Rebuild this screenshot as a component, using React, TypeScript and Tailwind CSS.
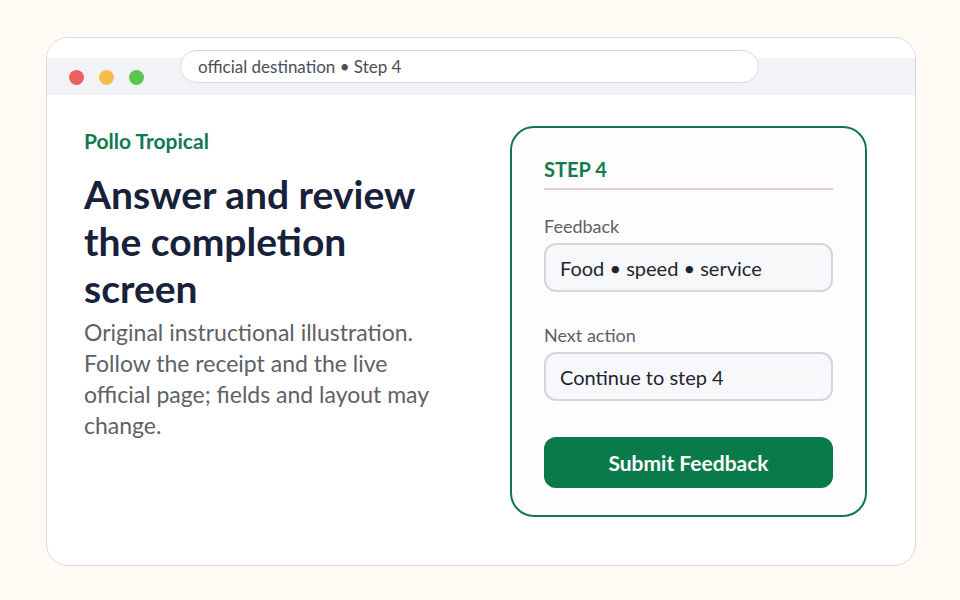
import React from 'react';

const fields = [
  { label: 'Feedback', value: 'Food • speed • service' },
  { label: 'Next action', value: 'Continue to step 4' },
];

export default function App() {
  return (
    <div
      className="min-h-[600px] w-[960px] bg-[#fffaf4] pt-[37px] pl-[46px]"
      style={{ fontFamily: 'Lato, "Noto Sans", sans-serif' }}
    >
      <div className="h-[529px] w-[870px] overflow-hidden rounded-[22px] border border-[#d8dae2] bg-white">
        {/* browser chrome */}
        <div className="flex h-[57px] items-start bg-[linear-gradient(to_bottom,#ffffff_20px,#f1f3f6_20px)] pl-[22px]">
          <div className="mt-[32px] flex gap-[15px]">
            <span className="h-[15px] w-[15px] rounded-full bg-[#ec5f5f]" />
            <span className="h-[15px] w-[15px] rounded-full bg-[#f6bb4a]" />
            <span className="h-[15px] w-[15px] rounded-full bg-[#5ac54f]" />
          </div>
          <div className="ml-[36px] mt-[12px] flex h-[33px] w-[579px] items-center rounded-full border border-[#d8dae2] bg-white pl-[17px] text-[17px] text-[#4a4f59]">
            official destination • Step 4
          </div>
        </div>

        <div className="flex pt-[31px] pl-[37px]">
          <div className="w-[360px]">
            <div className="pt-[2px] text-[21px] font-bold leading-[26px] text-[#0f7a4f]">
              Pollo Tropical
            </div>
            <h1 className="mt-[17px] text-[39px] font-bold leading-[47px] text-[#18213a]">
              Answer and review the completion screen
            </h1>
            <p className="mt-[5px] text-[23px] leading-[31px] text-[#5d6169]">
              Original instructional illustration. Follow the receipt and the live official page; fields and layout may change.
            </p>
          </div>

          <div className="ml-[66px] h-[391px] w-[357px] rounded-[24px] border-2 border-[#127652] bg-[#fffdfb] px-[32px] pt-[29px]">
            <div className="border-b-2 border-[#dccfd0] pb-[7px] text-[20px] font-bold leading-[24px] text-[#117a4f]">
              STEP 4
            </div>
            <div className="mt-[25px] flex flex-col">
              {fields.map((f, i) => (
                <div key={f.label} className={i > 0 ? 'mt-[32px]' : ''}>
                  <div className="text-[18px] leading-[22px] text-[#5d6169]">{f.label}</div>
                  <div className="mt-[6px] flex h-[49px] items-center rounded-[12px] border-2 border-[#d3d6dc] bg-[#f6f8fa] pl-[14px] text-[20px] text-[#1f2430]">
                    {f.value}
                  </div>
                </div>
              ))}
            </div>
            <button className="mt-[36px] flex h-[51px] w-full items-center justify-center rounded-[12px] bg-[#0b7a4b] text-[21px] font-bold text-white">
              Submit Feedback
            </button>
          </div>
        </div>
      </div>
    </div>
  );
}
